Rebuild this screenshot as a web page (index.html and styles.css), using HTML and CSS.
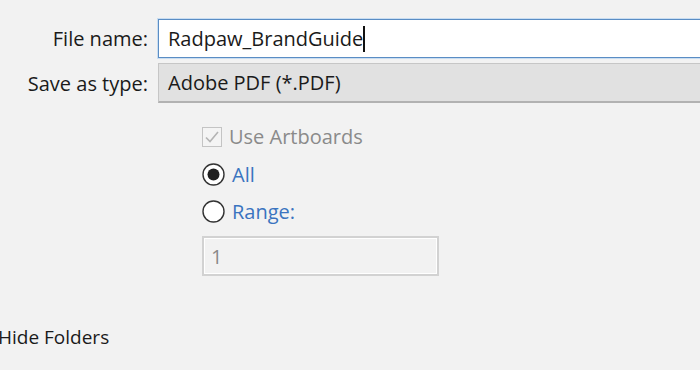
FILE: index.html
```html
<!DOCTYPE html>
<html lang="en">
<head>
    <meta charset="UTF-8">
    <title>Save As</title>
    <link rel="stylesheet" href="styles.css">
</head>
<body>
    <div class="dialog">
        <div class="form-row">
            <label class="form-label" for="fileName">File name:</label>
            <div class="field field-active">
                <span class="field-text">Radpaw_BrandGuide</span><span class="caret"></span>
            </div>
        </div>
        <div class="form-row">
            <span class="form-label">Save as type:</span>
            <div class="field field-select">
                <span class="field-text">Adobe PDF (*.PDF)</span>
            </div>
        </div>

        <div class="options">
            <div class="option option-disabled">
                <span class="check">
                    <svg width="20" height="20" viewBox="0 0 20 20">
                        <rect x="0.5" y="0.5" width="19" height="19" fill="#f4f4f4" stroke="#c4c4c4"/>
                        <path d="M4 10.5 L8 14.5 L16 5" fill="none" stroke="#b4b4b4" stroke-width="1.6"/>
                    </svg>
                </span>
                <span>Use Artboards</span>
            </div>
            <div class="option option-blue">
                <span class="radio">
                    <svg width="23" height="23" viewBox="0 0 23 23">
                        <circle cx="11.5" cy="11.5" r="10.5" fill="#fff" stroke="#333" stroke-width="1.4"/>
                        <circle cx="11.5" cy="11.5" r="6" fill="#1f1f1f"/>
                    </svg>
                </span>
                <span>All</span>
            </div>
            <div class="option option-blue">
                <span class="radio">
                    <svg width="23" height="23" viewBox="0 0 23 23">
                        <circle cx="11.5" cy="11.5" r="10.5" fill="#fff" stroke="#333" stroke-width="1.4"/>
                    </svg>
                </span>
                <span>Range:</span>
            </div>
            <div class="range-box">1</div>
        </div>

        <div class="hide-folders">Hide Folders</div>
    </div>
</body>
</html>
```

FILE: styles.css
```css
/* Save As dialog */
body {
    margin: 0;
    background-color: #f2f2f2;
    font-family: "Open Sans", "Noto Sans", sans-serif;
    font-size: 20px;
    line-height: 27px;
    color: #1a1a1a;
    overflow: hidden;
}
.dialog {
    width: 760px;
    padding-top: 19px;
}
.form-row {
    display: flex;
    align-items: center;
    margin-bottom: 5px;
}
.form-label {
    width: 148px;
    padding-right: 10px;
    text-align: right;
    flex-shrink: 0;
}
.field {
    flex: 1;
    height: 39px;
    box-sizing: border-box;
    display: flex;
    align-items: center;
    padding-left: 9px;
}
.field-active {
    background-color: #ffffff;
    border: 1px solid #5a8dc4;
    box-shadow: 0 0 0 1px #c9ddf1;
}
.field-select {
    height: 40px;
    background-color: #e1e1e1;
    border: 1px solid #c6c6c6;
    border-bottom: 2px solid #b2b2b2;
}
.caret {
    display: inline-block;
    width: 2px;
    height: 26px;
    background-color: #111;
}
.options {
    margin-left: 202px;
    margin-top: 22px;
}
.option {
    display: flex;
    align-items: center;
    height: 23px;
    margin-bottom: 14px;
}
.option-disabled {
    color: #8a8a8a;
    margin-bottom: 15px;
}
.option-blue {
    color: #3a74c0;
}
.check,
.radio {
    display: flex;
    margin-right: 7px;
}
.range-box {
    width: 237px;
    height: 40px;
    box-sizing: border-box;
    margin-top: -1px;
    border: 2px solid #d2d2d2;
    box-shadow: inset 0 0 0 1px #ffffff;
    background-color: #f2f2f2;
    color: #8a8a8a;
    padding-left: 7px;
    display: flex;
    align-items: center;
}
.hide-folders {
    margin-top: 48px;
    margin-left: -2px;
    font-size: 19px;
}
```
